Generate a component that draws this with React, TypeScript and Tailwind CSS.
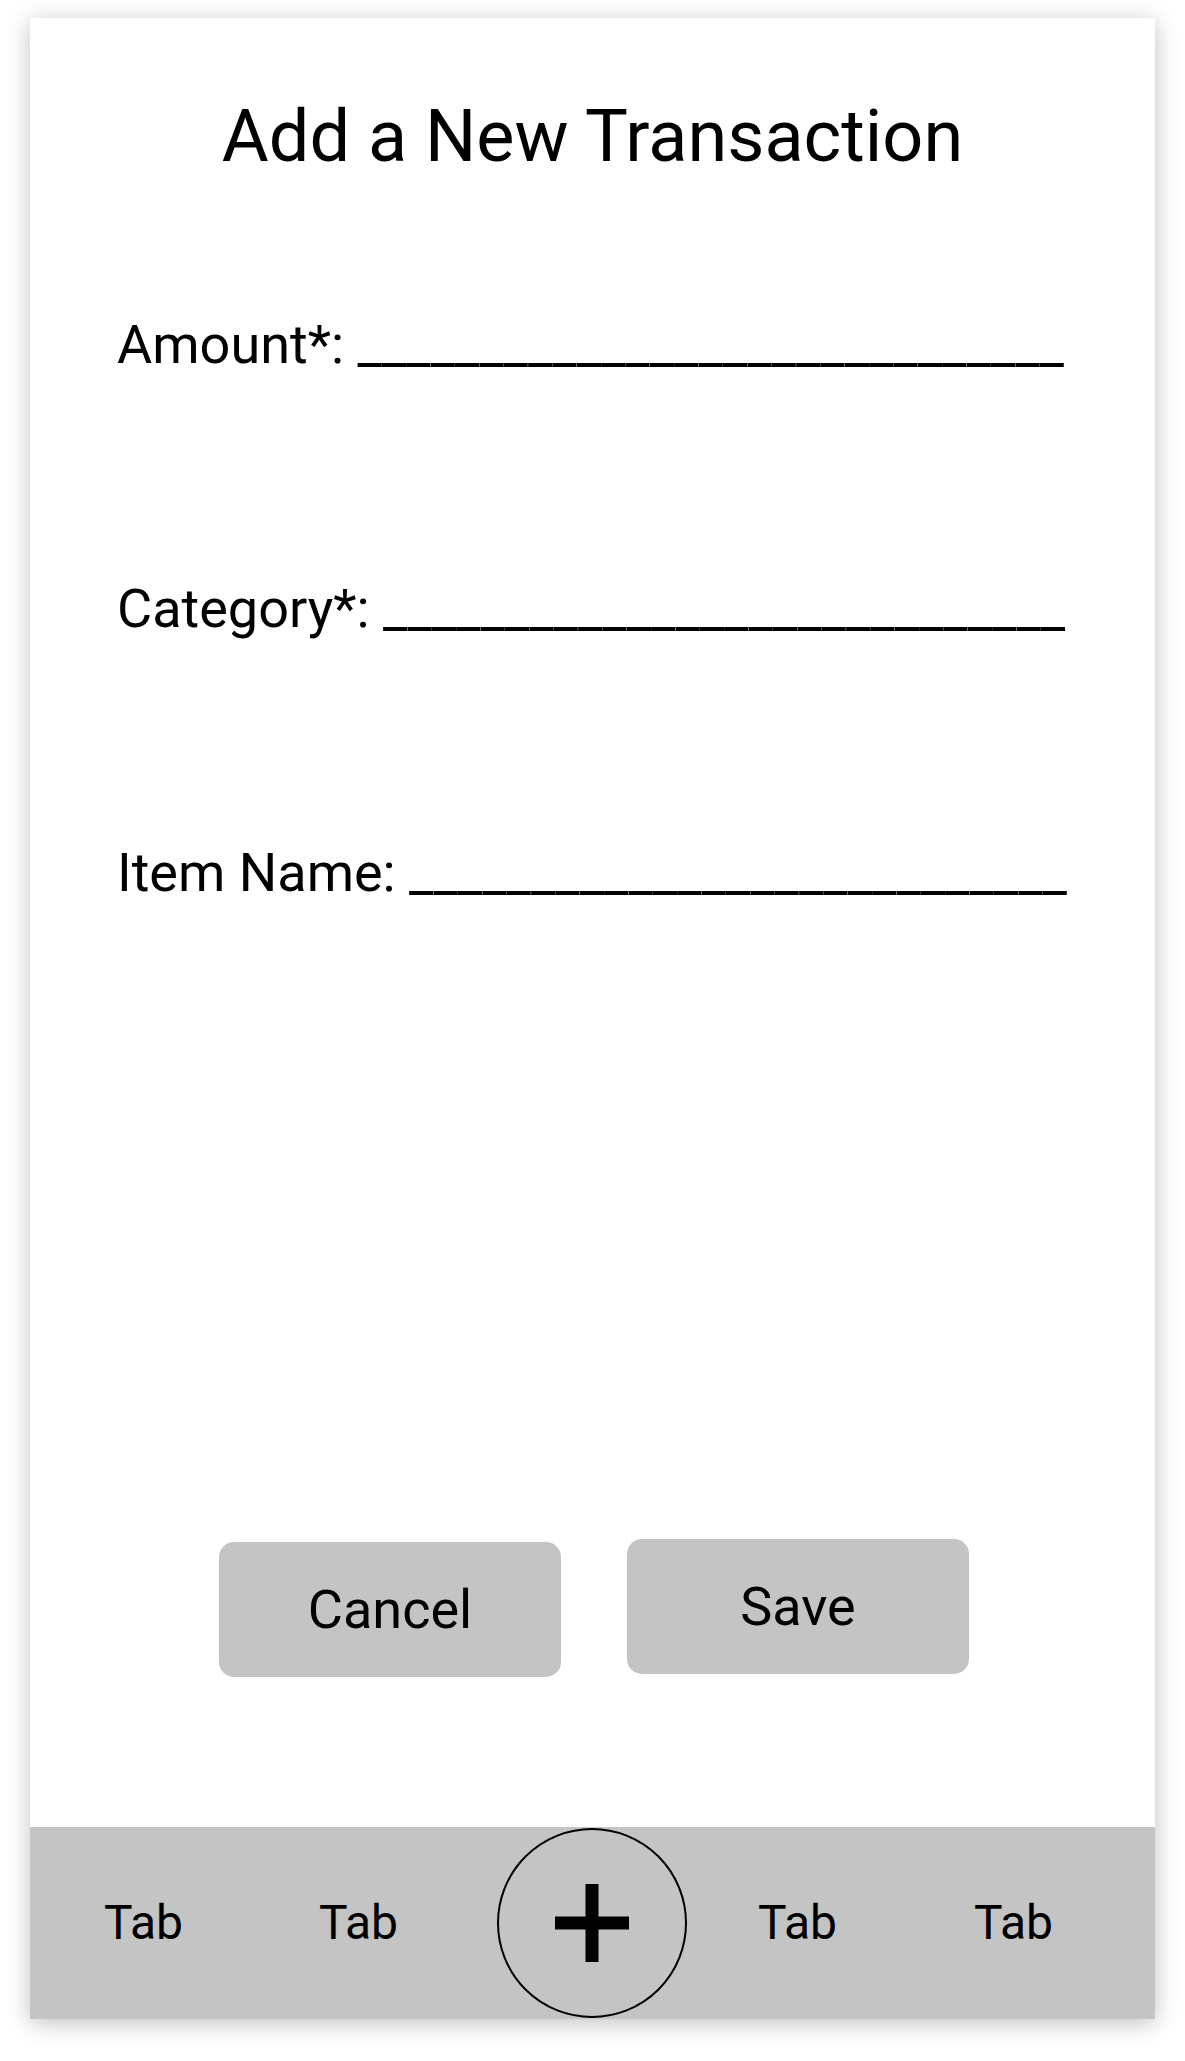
import React from 'react';

const fields = [
  { label: 'Amount*:', line: 29 },
  { label: 'Category*:', line: 28 },
  { label: 'Item Name:', line: 27 },
];

const App: React.FC = () => {
  return (
    <div className="min-h-[2061px] w-full bg-white pt-[18px] pl-[30px] font-['Roboto',sans-serif] text-black">
      <div className="w-[1125px] h-[2001px] bg-white flex flex-col shadow-[0_4px_22px_rgba(0,0,0,0.25)]">
        {/* Form */}
        <div className="flex-1 flex flex-col">
          <h1 className="mt-[83px] text-center text-[72px] leading-none font-normal">
            Add a New Transaction
          </h1>

          {fields.map((f, i) => (
            <p
              key={f.label}
              className={`pl-[87px] text-[54px] leading-none whitespace-pre ${i === 0 ? 'mt-[145px]' : 'mt-[210px]'}`}
            >
              {f.label} {'_'.repeat(f.line)}
            </p>
          ))}

          <div className="mt-auto mb-[150px] flex justify-center items-start gap-[66px] pl-[3px]">
            <button className="mt-[3px] w-[342px] h-[135px] rounded-[15px] bg-[#c4c4c4] text-[54px] leading-none">
              Cancel
            </button>
            <button className="w-[342px] h-[135px] rounded-[15px] bg-[#c4c4c4] text-[54px] leading-none">
              Save
            </button>
          </div>
        </div>

        {/* Tab bar */}
        <div className="h-[192px] bg-[#c4c4c4] flex items-center pl-[74px] text-[48px] leading-none">
          <span className="w-[215px]">Tab</span>
          <span className="w-[178px]">Tab</span>
          <div className="w-[190px] h-[190px] rounded-full border-2 border-black flex items-center justify-center">
            <svg width="74" height="78" viewBox="0 0 74 78">
              <rect x="30.5" y="0" width="13" height="78" fill="black" />
              <rect x="0" y="32.5" width="74" height="13" fill="black" />
            </svg>
          </div>
          <span className="ml-[71px] w-[216px]">Tab</span>
          <span>Tab</span>
        </div>
      </div>
    </div>
  );
};

export default App;
